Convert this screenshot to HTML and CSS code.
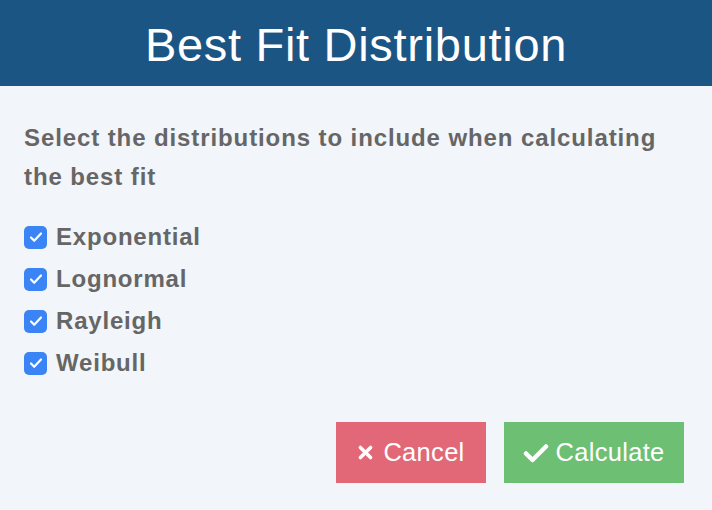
FILE: index.html
```html
<!DOCTYPE html>
<html>
<head>
<meta charset="utf-8">
<link rel="stylesheet" href="styles.css">
</head>
<body>
<div class="dialog">
  <div class="header"><h1 class="title">Best Fit Distribution</h1></div>
  <div class="content">
    <p class="prompt">Select the distributions to include when calculating the best fit</p>
    <ul class="options">
      <li class="option"><span class="box"><svg viewBox="0 0 22 22" width="22" height="22"><path d="M6 11.5l3.2 3.3L16 7.5" fill="none" stroke="#fff" stroke-width="2.2" stroke-linecap="round" stroke-linejoin="round"/></svg></span>Exponential</li>
      <li class="option"><span class="box"><svg viewBox="0 0 22 22" width="22" height="22"><path d="M6 11.5l3.2 3.3L16 7.5" fill="none" stroke="#fff" stroke-width="2.2" stroke-linecap="round" stroke-linejoin="round"/></svg></span>Lognormal</li>
      <li class="option"><span class="box"><svg viewBox="0 0 22 22" width="22" height="22"><path d="M6 11.5l3.2 3.3L16 7.5" fill="none" stroke="#fff" stroke-width="2.2" stroke-linecap="round" stroke-linejoin="round"/></svg></span>Rayleigh</li>
      <li class="option"><span class="box"><svg viewBox="0 0 22 22" width="22" height="22"><path d="M6 11.5l3.2 3.3L16 7.5" fill="none" stroke="#fff" stroke-width="2.2" stroke-linecap="round" stroke-linejoin="round"/></svg></span>Weibull</li>
    </ul>
    <div class="actions">
      <button class="btn btn-cancel"><svg class="icon icon-x" viewBox="0 0 20 20" width="17" height="17"><path d="M4 4L16 16M16 4L4 16" stroke="#fff" stroke-width="4.2" stroke-linecap="round"/></svg>Cancel</button>
      <button class="btn btn-calc"><svg class="icon" viewBox="0 0 26 20" width="26" height="20"><path d="M3 10.5l6.5 6.5L23 3.5" fill="none" stroke="#fff" stroke-width="4.5" stroke-linecap="round" stroke-linejoin="round"/></svg>Calculate</button>
    </div>
  </div>
</div>
</body>
</html>
```

FILE: styles.css
```css
html, body {
  margin: 0;
  padding: 0;
  background: #f2f5f9;
  font-family: "Liberation Sans", Arial, Helvetica, sans-serif;
}
.dialog {
  width: 712px;
  height: 510px;
  background: #f2f5f9;
}
.header {
  background: #1b5583;
  height: 86px;
  display: flex;
  align-items: center;
  justify-content: center;
}
.title {
  margin: 0;
  color: #fff;
  font-weight: normal;
  font-size: 47px;
  letter-spacing: 0.7px;
  line-height: 1;
  padding-top: 2px;
}
.content {
  padding: 32px 24px 0 24px;
}
.prompt {
  margin: 0;
  color: #666666;
  font-weight: bold;
  font-size: 24px;
  letter-spacing: 0.9px;
  line-height: 39px;
  width: 660px;
}
.options {
  list-style: none;
  margin: 20px 0 0 0;
  padding: 0;
}
.option {
  display: flex;
  align-items: center;
  height: 42px;
  color: #666666;
  font-weight: bold;
  font-size: 24px;
  letter-spacing: 0.8px;
}
.box {
  width: 23px;
  height: 23px;
  border-radius: 5px;
  background: #3a84f5;
  display: flex;
  align-items: center;
  justify-content: center;
  margin-right: 9px;
}
.actions {
  display: flex;
  justify-content: flex-end;
  gap: 18px;
  margin-top: 38px;
  padding-right: 4px;
}
.btn {
  border: none;
  color: #fff;
  font-family: "Liberation Sans", Arial, Helvetica, sans-serif;
  font-size: 25.5px;
  letter-spacing: 0.3px;
  height: 61px;
  display: flex;
  align-items: center;
  justify-content: center;
  padding: 0;
}
.btn-cancel {
  background: #e26878;
  width: 150px;
}
.btn-calc {
  background: #6cbf73;
  width: 180px;
}
.icon {
  margin-right: 6px;
}
.icon-x {
  margin-right: 9px;
}
```
